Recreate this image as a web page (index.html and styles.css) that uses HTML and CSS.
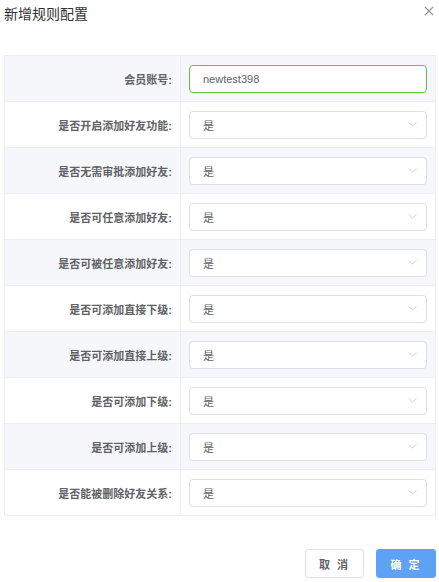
FILE: index.html
```html
<!DOCTYPE html>
<html lang="zh">
<head>
    <meta charset="UTF-8">
    <title>新增规则配置</title>
    <link rel="stylesheet" href="styles.css">
</head>
<body>
    <div class="dialog">
        <div class="dialog-header">
            <span class="dialog-title">新增规则配置</span>
            <span class="dialog-close">
                <svg width="10" height="10" viewBox="0 0 10 10"><path d="M1 1L9 9M9 1L1 9" stroke="#909399" stroke-width="1.1" fill="none"/></svg>
            </span>
        </div>
        <table class="form-table">
            <tr>
                <td class="label">会员账号:</td>
                <td class="field"><div class="input success">newtest398</div></td>
            </tr>
            <tr>
                <td class="label">是否开启添加好友功能:</td>
                <td class="field"><div class="input select">是<svg class="arrow" viewBox="0 0 10 6"><path d="M0.5 0.5L5 5L9.5 0.5" stroke="#c0c4cc" fill="none"/></svg></div></td>
            </tr>
            <tr>
                <td class="label">是否无需审批添加好友:</td>
                <td class="field"><div class="input select">是<svg class="arrow" viewBox="0 0 10 6"><path d="M0.5 0.5L5 5L9.5 0.5" stroke="#c0c4cc" fill="none"/></svg></div></td>
            </tr>
            <tr>
                <td class="label">是否可任意添加好友:</td>
                <td class="field"><div class="input select">是<svg class="arrow" viewBox="0 0 10 6"><path d="M0.5 0.5L5 5L9.5 0.5" stroke="#c0c4cc" fill="none"/></svg></div></td>
            </tr>
            <tr>
                <td class="label">是否可被任意添加好友:</td>
                <td class="field"><div class="input select">是<svg class="arrow" viewBox="0 0 10 6"><path d="M0.5 0.5L5 5L9.5 0.5" stroke="#c0c4cc" fill="none"/></svg></div></td>
            </tr>
            <tr>
                <td class="label">是否可添加直接下级:</td>
                <td class="field"><div class="input select">是<svg class="arrow" viewBox="0 0 10 6"><path d="M0.5 0.5L5 5L9.5 0.5" stroke="#c0c4cc" fill="none"/></svg></div></td>
            </tr>
            <tr>
                <td class="label">是否可添加直接上级:</td>
                <td class="field"><div class="input select">是<svg class="arrow" viewBox="0 0 10 6"><path d="M0.5 0.5L5 5L9.5 0.5" stroke="#c0c4cc" fill="none"/></svg></div></td>
            </tr>
            <tr>
                <td class="label">是否可添加下级:</td>
                <td class="field"><div class="input select">是<svg class="arrow" viewBox="0 0 10 6"><path d="M0.5 0.5L5 5L9.5 0.5" stroke="#c0c4cc" fill="none"/></svg></div></td>
            </tr>
            <tr>
                <td class="label">是否可添加上级:</td>
                <td class="field"><div class="input select">是<svg class="arrow" viewBox="0 0 10 6"><path d="M0.5 0.5L5 5L9.5 0.5" stroke="#c0c4cc" fill="none"/></svg></div></td>
            </tr>
            <tr>
                <td class="label">是否能被删除好友关系:</td>
                <td class="field"><div class="input select">是<svg class="arrow" viewBox="0 0 10 6"><path d="M0.5 0.5L5 5L9.5 0.5" stroke="#c0c4cc" fill="none"/></svg></div></td>
            </tr>
        </table>
        <div class="dialog-footer">
            <button class="btn">取 消</button>
            <button class="btn primary">确 定</button>
        </div>
    </div>
</body>
</html>
```

FILE: styles.css
```css
body {
    margin: 0;
    background-color: #fff;
    font-family: "Liberation Sans", "Noto Sans CJK SC", sans-serif;
    color: #606266;
}
.dialog {
    padding: 0 3px 0 4px;
}
.dialog-header {
    display: flex;
    justify-content: space-between;
    align-items: center;
    height: 26px;
}
.dialog-title {
    font-size: 14px;
    color: #303133;
}
.dialog-close {
    display: flex;
    margin-right: 2px;
    margin-top: -4px;
}
.form-table {
    width: 432px;
    margin-top: 29px;
    border-collapse: collapse;
    border: 1px solid #ebeef5;
}
.form-table td {
    height: 45px;
    padding: 0;
    border: 1px solid #ebeef5;
}
.form-table tr:nth-child(odd) {
    background-color: #f5f7fa;
}
.label {
    width: 167px;
    padding-right: 8px !important;
    text-align: right;
    font-size: 11px;
    font-weight: bold;
}
.field {
    padding: 0 8px !important;
}
.input {
    height: 26px;
    display: flex;
    align-items: center;
    padding: 0 9px 0 13px;
    border: 1px solid #dcdfe6;
    border-radius: 4px;
    background-color: #fff;
    font-size: 11px;
    color: #606266;
}
.input.success {
    border-color: #67c23a;
}
.select {
    justify-content: space-between;
}
.arrow {
    width: 9px;
    height: 5px;
}
.dialog-footer {
    display: flex;
    justify-content: flex-end;
    gap: 12px;
    margin-top: 33px;
}
.btn {
    width: 59px;
    height: 29px;
    border: 1px solid #dcdfe6;
    border-radius: 3px;
    background-color: #fff;
    color: #606266;
    font-family: inherit;
    font-size: 11px;
    font-weight: bold;
    letter-spacing: 2px;
    cursor: pointer;
}
.btn.primary {
    width: 60px;
    background-color: #5ea2f7;
    border-color: #5ea2f7;
    color: #fff;
}
```
